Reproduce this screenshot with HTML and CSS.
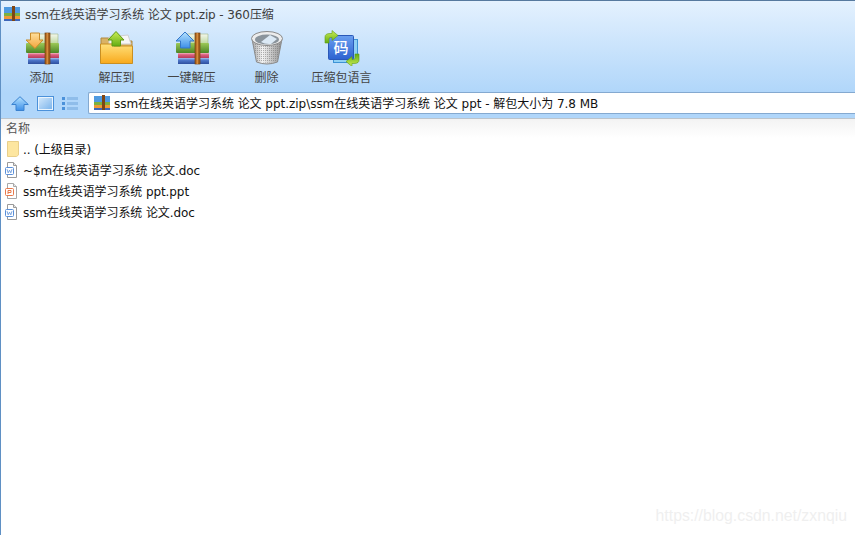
FILE: index.html
```html
<!DOCTYPE html>
<html>

<head>
    <meta charset="utf-8">
    <meta name="viewport" content="width=device-width, initial-scale=1.0">
    <title>360压缩</title>
    <link rel="stylesheet" href="styles.css">
</head>

<body>
    <svg class="defs" width="0" height="0">
        <defs>
            <linearGradient id="gGreen" x1="0" y1="0" x2="0" y2="1">
                <stop offset="0" stop-color="#9cc957" /><stop offset="1" stop-color="#4b8526" />
            </linearGradient>
            <linearGradient id="gPages" x1="0" y1="0" x2="0" y2="1">
                <stop offset="0" stop-color="#f4f7ee" /><stop offset="1" stop-color="#bcd89a" />
            </linearGradient>
            <linearGradient id="gPink" x1="0" y1="0" x2="0" y2="1">
                <stop offset="0" stop-color="#f0b7c5" /><stop offset=".35" stop-color="#dc5f80" /><stop offset="1" stop-color="#b53a5c" />
            </linearGradient>
            <linearGradient id="gNavy" x1="0" y1="0" x2="0" y2="1">
                <stop offset="0" stop-color="#a9c1ee" /><stop offset=".35" stop-color="#4f78cc" /><stop offset="1" stop-color="#2e4f9e" />
            </linearGradient>
            <linearGradient id="gFolder" x1="0" y1="0" x2="0" y2="1">
                <stop offset="0" stop-color="#ffe07a" /><stop offset="1" stop-color="#f8a91c" />
            </linearGradient>
            <linearGradient id="gOrange" x1="0" y1="0" x2="0" y2="1">
                <stop offset="0" stop-color="#ffdf9c" /><stop offset="1" stop-color="#f2a63c" />
            </linearGradient>
            <linearGradient id="gBlue" x1="0" y1="0" x2="0" y2="1">
                <stop offset="0" stop-color="#b4e2ff" /><stop offset="1" stop-color="#3d8fe8" />
            </linearGradient>
            <linearGradient id="gArrowGreen" x1="0" y1="0" x2="0" y2="1">
                <stop offset="0" stop-color="#cdee55" /><stop offset="1" stop-color="#63ad14" />
            </linearGradient>
            <linearGradient id="gBin" x1="0" y1="0" x2="1" y2="0">
                <stop offset="0" stop-color="#a6a6a6" /><stop offset=".35" stop-color="#f2f2f2" /><stop offset="1" stop-color="#929292" />
            </linearGradient>
            <linearGradient id="gCode" x1="0" y1="0" x2="0" y2="1">
                <stop offset="0" stop-color="#6a9ff0" /><stop offset="1" stop-color="#2d62d0" />
            </linearGradient>
            <linearGradient id="gSquare" x1="0" y1="0" x2="1" y2="1">
                <stop offset="0" stop-color="#cfe6fb" /><stop offset="1" stop-color="#7db5ec" />
            </linearGradient>
            <pattern id="pHoles" width="2" height="2" patternUnits="userSpaceOnUse">
                <rect width="1" height="1" fill="#6e6e6e" opacity=".5" />
            </pattern>
            <symbol id="books" viewBox="0 0 36 36">
                <path d="M7 14 L12 4 H33 V14 Z" fill="url(#gPages)" stroke="#9db583" stroke-width=".6" />
                <rect x="1" y="13" width="33" height="10" rx="1" fill="url(#gGreen)" />
                <rect x="3" y="23" width="31" height="5" fill="url(#gPink)" />
                <rect x="3" y="28" width="31" height="6" fill="url(#gNavy)" />
                <rect x="20" y="3" width="5" height="31" fill="#a3611f" stroke="#74410f" stroke-width=".7" />
                <rect x="21.5" y="3" width="1.6" height="31" fill="#d58a3a" />
            </symbol>
            <symbol id="tiny-books" viewBox="0 0 16 16">
                <rect x="0" y="1" width="16" height="6" fill="#4f9ae0" />
                <rect x="0" y="7" width="16" height="3" fill="#7bb040" />
                <rect x="0" y="10" width="16" height="3" fill="#ee9a36" />
                <rect x="0" y="13" width="16" height="2" fill="#3f66b8" />
                <rect x="8" y="0" width="3" height="15" fill="#7e4514" />
            </symbol>
            <symbol id="doc" viewBox="0 0 15 16">
                <path d="M2.5 .5 H8.5 L11.5 3.5 V15.5 H2.5 Z" fill="#fff" stroke="#9a9a9a" />
                <path d="M8.5 .5 V3.5 H11.5" fill="#e4e4e4" stroke="#9a9a9a" />
                <rect x=".5" y="5.5" width="8" height="7" rx="1" fill="#fff" stroke="#5a8fd8" />
                <path d="M2 7.2 L3.2 10.8 L4.5 8.2 L5.8 10.8 L7 7.2" fill="none" stroke="#5a8fd8" stroke-width=".8" />
            </symbol>
            <symbol id="ppt" viewBox="0 0 15 16">
                <path d="M2.5 .5 H8.5 L11.5 3.5 V15.5 H2.5 Z" fill="#fff" stroke="#a8a8a8" />
                <path d="M8.5 .5 V3.5 H11.5" fill="#e8e8e8" stroke="#a8a8a8" />
                <rect x=".5" y="5.5" width="8" height="7" rx="1" fill="#fff" stroke="#e8784a" />
                <path d="M3 11 V7.5 H6 V9.5 H3" fill="none" stroke="#e8784a" />
            </symbol>
        </defs>
    </svg>

    <div class="window">
        <header class="top">
            <div class="titlebar">
                <svg class="title-icon" width="16" height="16"><use href="#tiny-books" /></svg>
                <span>ssm在线英语学习系统 论文 ppt.zip - 360压缩</span>
            </div>

            <div class="tools">
                <div class="tool">
                    <svg width="36" height="36" viewBox="0 0 36 36">
                        <use href="#books" x="1" y="0" width="36" height="36" />
                        <path d="M6.5 3 H15.5 V10 H19 L11 18.5 L2 10 H6.5 Z" fill="url(#gOrange)" stroke="#c98a28" />
                    </svg>
                    <span>添加</span>
                </div>
                <div class="tool">
                    <svg width="36" height="36" viewBox="0 0 36 36">
                        <path d="M2 8 H12 L14 11 H33 V33 H2 Z" fill="#d9b266" stroke="#b0893e" />
                        <path d="M10 7 L29 5 L32 14 H10 Z" fill="#f6f6f6" stroke="#cfcfcf" />
                        <path d="M1.5 14 H13 L15 16 H33.5 V33.5 H1.5 Z" fill="url(#gFolder)" stroke="#c98f22" />
                        <path d="M13 1.5 L21 10 H17.5 V16 H9 V10 H5 Z" transform="translate(4 0)" fill="url(#gArrowGreen)" stroke="#5f9a14" />
                    </svg>
                    <span>解压到</span>
                </div>
                <div class="tool">
                    <svg width="36" height="36" viewBox="0 0 36 36">
                        <use href="#books" x="1" y="0" width="36" height="36" />
                        <path d="M11 2 L20 11 H16 V18 H6.5 V11 H2 Z" fill="url(#gBlue)" stroke="#3477c8" />
                    </svg>
                    <span>一键解压</span>
                </div>
                <div class="tool">
                    <svg width="36" height="36" viewBox="0 0 36 36">
                        <path d="M3 9 L7.5 32 Q18 36 28.5 32 L33 9 Z" fill="url(#gBin)" stroke="#8a8a8a" />
                        <path d="M4.5 14 L8 31 Q18 34.5 28 31 L31.5 14 Z" fill="url(#pHoles)" />
                        <ellipse cx="18" cy="8.5" rx="15.5" ry="7" fill="#ececec" stroke="#8a8a8a" />
                        <ellipse cx="18" cy="9.5" rx="12" ry="5" fill="#8a949c" />
                        <path d="M12 12 L21 5 L28 9 L22 14 Q16 14.5 12 12 Z" fill="#dbe9f5" />
                    </svg>
                    <span>删除</span>
                </div>
                <div class="tool">
                    <svg width="36" height="36" viewBox="0 0 36 36">
                        <rect x="9.5" y="9.5" width="24" height="23" fill="#8fd0f5" stroke="#3d93d6" />
                        <rect x="4.5" y="5.5" width="25" height="24" rx="1" fill="url(#gCode)" stroke="#2a58b8" />
                        <text class="code-char" x="17" y="23" text-anchor="middle">码</text>
                        <path d="M1 13 V7 Q1 3.5 6 3.5 H8 V.5 L14 5.5 L8 10.5 V7.5 H6.5 Q5 7.5 5 9 V13 Z" fill="url(#gArrowGreen)" stroke="#5f9a14" stroke-width=".6" />
                        <path d="M1 13 V7 Q1 3.5 6 3.5 H8 V.5 L14 5.5 L8 10.5 V7.5 H6.5 Q5 7.5 5 9 V13 Z" transform="rotate(180 18 18.5)" fill="url(#gArrowGreen)" stroke="#5f9a14" stroke-width=".6" />
                    </svg>
                    <span>压缩包语言</span>
                </div>
            </div>

            <div class="navrow">
                <div class="nav-icons">
                    <svg width="18" height="15" viewBox="0 0 18 15">
                        <path d="M9 .7 L17.3 8.5 H13 V14.5 H5 V8.5 H.7 Z" fill="url(#gBlue)" stroke="#3a82d0" />
                    </svg>
                    <svg width="17" height="15" viewBox="0 0 17 15">
                        <rect x=".5" y=".5" width="16" height="14" fill="#eaf4fd" stroke="#4b91da" />
                        <rect x="2" y="2" width="13" height="11" fill="url(#gSquare)" />
                    </svg>
                    <svg width="16" height="15" viewBox="0 0 16 15" fill="#4b91da">
                        <rect x="0" y="1" width="3" height="3" /><rect x="5" y="1" width="11" height="3" fill="#8fbdea" />
                        <rect x="0" y="6" width="3" height="3" /><rect x="5" y="6" width="11" height="3" fill="#8fbdea" />
                        <rect x="0" y="11" width="3" height="3" /><rect x="5" y="11" width="11" height="3" fill="#8fbdea" />
                    </svg>
                </div>
                <div class="address">
                    <svg width="16" height="16"><use href="#tiny-books" /></svg>
                    <span>ssm在线英语学习系统 论文 ppt.zip\ssm在线英语学习系统 论文 ppt - 解包大小为 7.8 MB</span>
                </div>
            </div>
        </header>

        <main class="files">
            <div class="col-head">名称</div>
            <ul class="file-list">
                <li>
                    <svg width="15" height="16" viewBox="0 0 15 16">
                        <path d="M2.5 .5 H13.5 V14 L11.5 15.5 H2.5 Z" fill="#fde6a0" stroke="#e9cf8a" />
                    </svg>
                    <span>.. (上级目录)</span>
                </li>
                <li>
                    <svg width="15" height="16"><use href="#doc" /></svg>
                    <span>~$m在线英语学习系统 论文.doc</span>
                </li>
                <li>
                    <svg width="15" height="16"><use href="#ppt" /></svg>
                    <span>ssm在线英语学习系统 ppt.ppt</span>
                </li>
                <li>
                    <svg width="15" height="16"><use href="#doc" /></svg>
                    <span>ssm在线英语学习系统 论文.doc</span>
                </li>
            </ul>
        </main>

        <div class="watermark">https://blog.csdn.net/zxnqiu</div>
    </div>
</body>

</html>
```

FILE: styles.css
```css
* {
    box-sizing: border-box;
}

body {
    margin: 0;
    font-family: "DejaVu Sans", "Noto Sans CJK SC", sans-serif;
    font-size: 12px;
    color: #111;
}

.defs {
    position: absolute;
}

.window {
    position: relative;
    width: 855px;
    height: 535px;
    overflow: hidden;
    background: #fff;
    border-left: 1px solid #5f90c4;
    border-top: 1px solid #56799e;
}

.top {
    height: 118px;
    background: linear-gradient(#e4f1fe, #b0d6fa 92px);
    border-bottom: 1px solid #bcc4cc;
}

.titlebar {
    display: flex;
    align-items: center;
    gap: 5px;
    height: 25px;
    padding-left: 3px;
    color: #3c3c3c;
    letter-spacing: -0.1px;
    white-space: pre;
}

.tools {
    display: flex;
    height: 66px;
    padding-left: 3px;
}

.tool {
    display: flex;
    flex-direction: column;
    align-items: center;
    width: 75px;
    padding-top: 4px;
    gap: 2px;
    color: #444;
}

.code-char {
    font-size: 15px;
    font-weight: 500;
    fill: #fff;
}

.navrow {
    display: flex;
    align-items: center;
    height: 22px;
}

.nav-icons {
    display: flex;
    align-items: center;
    gap: 8px;
    margin-left: 10px;
    margin-right: 10px;
}

.address {
    flex: 1;
    display: flex;
    align-items: center;
    gap: 4px;
    height: 22px;
    padding: 0 0 1px 5px;
    background: #fff;
    border: 1px solid #84a9d0;
    border-right: 0;
    border-radius: 2px 0 0 2px;
    letter-spacing: -0.03px;
    white-space: pre;
}

.col-head {
    height: 19px;
    padding-left: 5px;
    color: #555;
    background: linear-gradient(#f3f3f3, #fff);
}

.file-list {
    list-style: none;
    margin: 0;
    padding: 0;
}

.file-list li {
    display: flex;
    align-items: center;
    gap: 3px;
    height: 21px;
    padding-left: 4px;
    letter-spacing: -0.09px;
}

.watermark {
    position: absolute;
    right: 8px;
    bottom: 10px;
    font-family: "Liberation Sans", sans-serif;
    font-size: 15.8px;
    color: #efefef;
}
```
